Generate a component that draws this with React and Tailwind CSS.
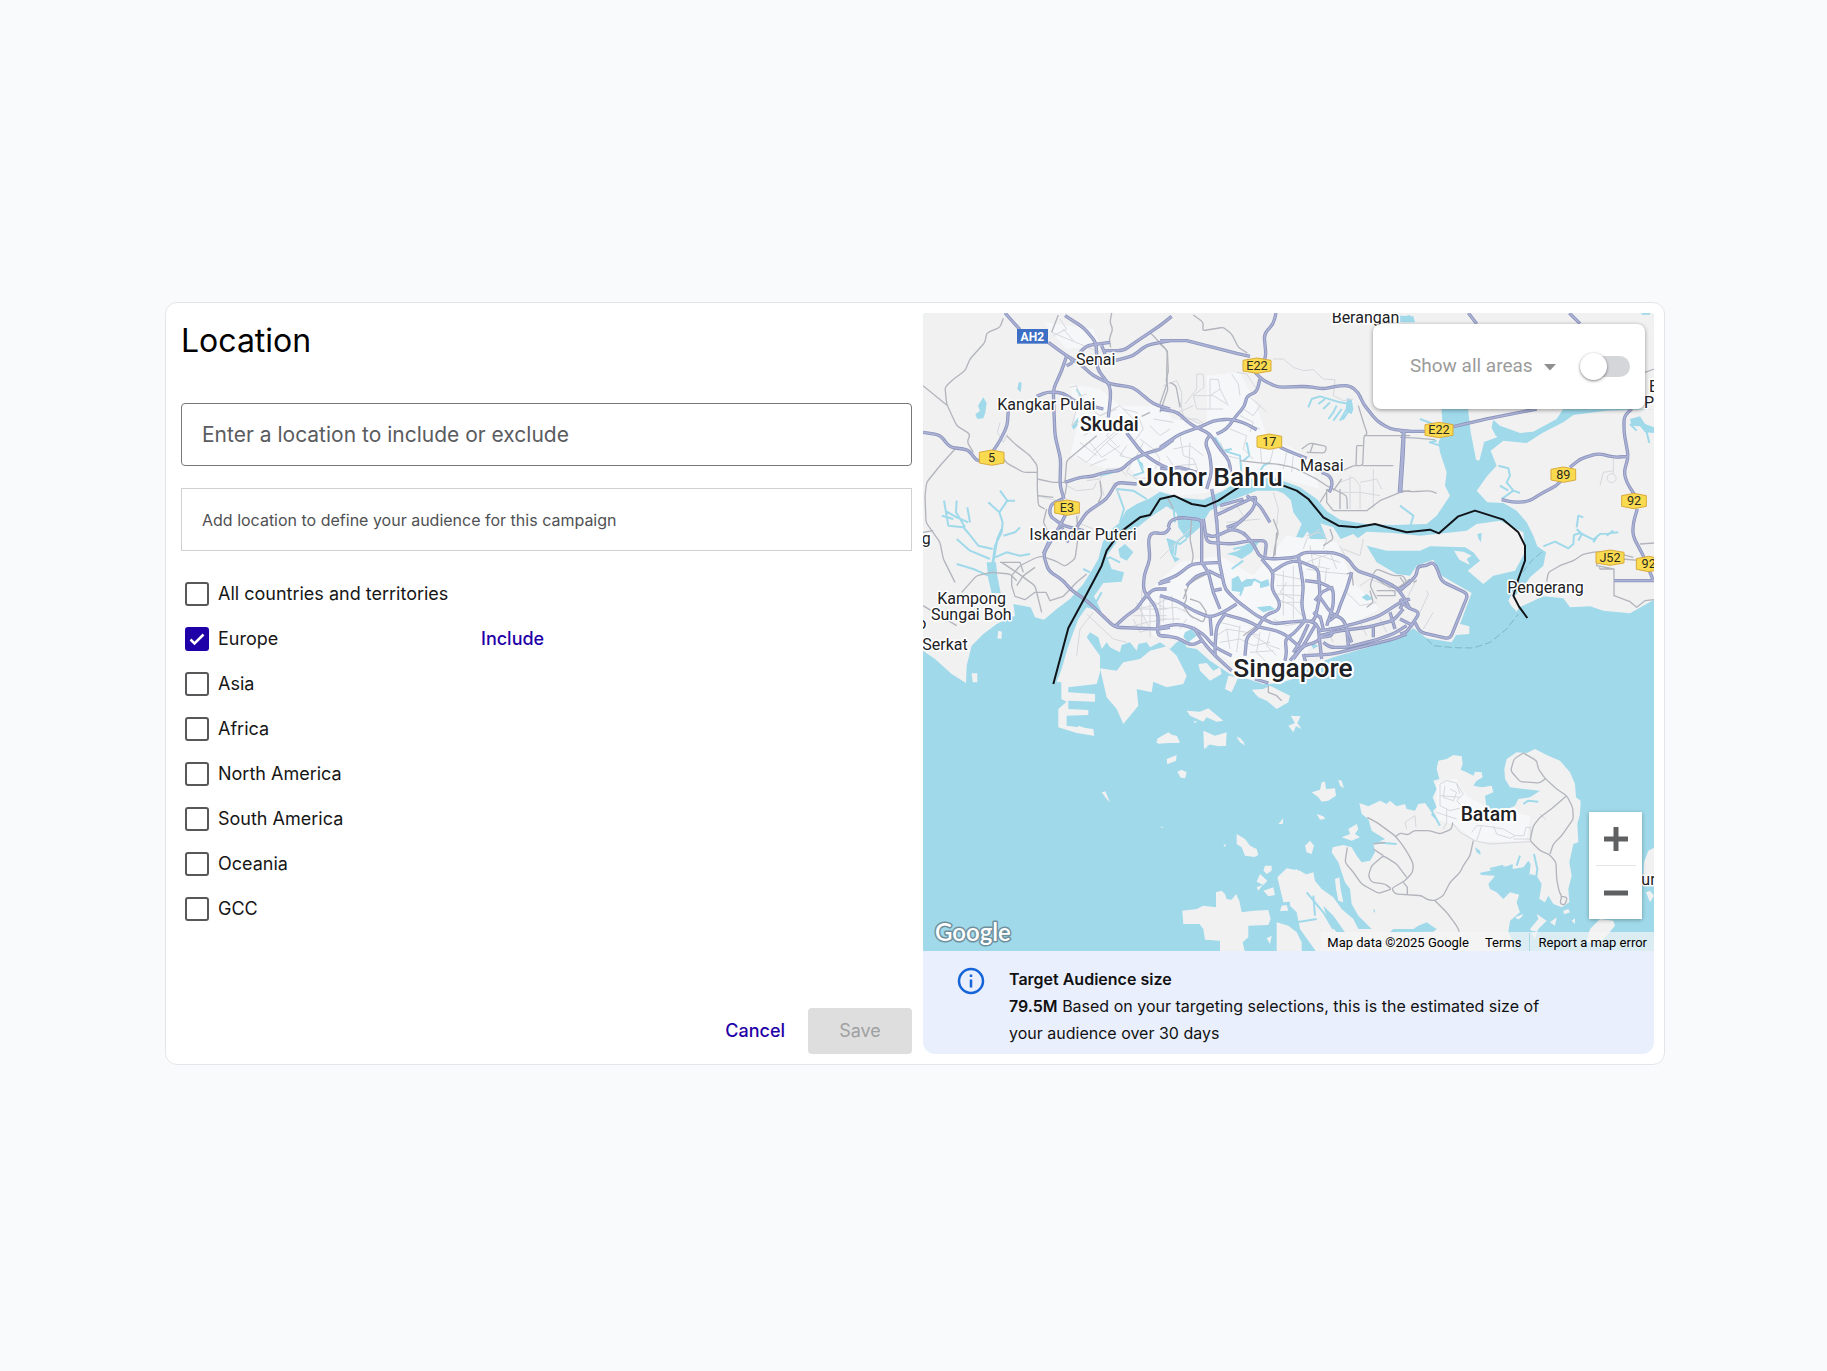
import { useState } from "react";

const REGIONS = [
  { name: "All countries and territories" },
  { name: "Europe", mode: "Include" },
  { name: "Asia" },
  { name: "Africa" },
  { name: "North America" },
  { name: "South America" },
  { name: "Oceania" },
  { name: "GCC" },
];

// The map is drawn from tiles, each with its own origin.
// land first, then towns, lakes and rivers, then streets < roads < highways
const TILES = [
  {
    x: 0,
    y: 0,
    land: [
      // Johor, west of the Johor river
      "M9 12H1645V80H1565V310L1570 370 1555 400 1560 430 1580 490 1575 530 1590 560 1570 590 1550 620 1520 645 1420 648 1340 646 1260 632 1220 606 1190 570 1140 535 1060 505 960 512 910 545 850 572 780 566 720 548 690 568 650 585 618 605 600 640 570 665 548 700 535 750 512 790 490 825 450 870 410 900 372 932 345 925 332 895 280 885 285 920 230 945 190 975 155 1010 140 1070 138 1122 95 1095 45 1050 9 1025Z",
      // Singapore
      "M640 665 690 625 740 592 770 612 775 655 800 690 840 655 870 605 930 575 1010 545 1070 545 1110 560 1120 610 1145 645 1130 680 1085 730 1130 715 1160 670 1200 643 1240 655 1262 690 1300 675 1340 710 1370 760 1430 795 1470 800 1490 770 1540 752 1565 800 1655 852 1620 945 1648 952V975L1608 978 1595 1000 1520 988 1480 958 1440 985 1360 1010 1240 1045 1170 1072 1150 1100 1080 1122 1030 1126 990 1112 930 1095 870 1055 830 1020 800 1015 790 990 770 1000 750 1020 720 1000 690 1015 680 1000 655 1005 650 1025 630 1000 605 1008 600 1030 570 1015 560 1000 545 1020 535 985 510 970 500 985 540 1040 540 1090 530 1125 445 1135V1150L525 1155V1178L445 1175V1200L505 1203V1218L440 1220V1250L520 1260 522 1280 470 1272 415 1255V1200L440 1178 424 1170V1120L410 1118 425 1080 442 1020 460 970 475 930 500 895 545 910 522 862 550 822 605 818 612 790 575 780 560 740 590 700Z",
      // Jurong island
      "M540 1078 590 1085 610 1060 660 1050 690 1025 740 1012 770 1040 800 1100 790 1125 740 1135 700 1118 695 1150 650 1140 655 1190 610 1245 590 1200 560 1165Z",
      "M155 1093H172V1120H158ZM235 965 246 968 244 990 232 988Z",
    ],
    urban: [
      "M450 225 540 240 600 290 720 290 760 330 860 350 860 200 960 190 1010 290 1040 380 1160 440 1200 540 1060 500 960 508 900 545 780 560 700 540 620 470 560 480 450 440 470 360Z",
      "M650 880 780 760 900 740 1000 800 1100 680 1250 700 1300 820 1380 900 1180 1000 1120 1090 980 1090 860 1010 700 980Z",
      "M370 40 520 60 540 110 440 120Z",
    ],
    water: [
      "M190 265 200 282 196 310 190 328 172 330 166 316 180 306 174 290ZM297 218 305 222 302 250 292 240Z",
      "M200 760H228L232 800 242 852H215L205 810Z",
      "M595 720 615 705 640 730 620 755 600 745Z",
      "M455 350 475 325 472 350 460 362ZM655 455 668 462 672 480Z",
    ],
    rivers: [
      "M215 780 225 710 245 670 248 640 238 610 262 575 240 545M262 575 285 575M238 610 205 580M218 720 175 710 145 672 130 655 85 650 72 575M110 575 108 610 135 655M75 605 110 625 145 640M210 750 150 725 110 690M205 800 160 780 110 765M225 745 260 730 300 740 330 735M250 680 285 670 300 655M100 630 65 620M150 640 142 595",
      "M220 760 232 690 245 660",
      "M600 640 612 600 590 540 640 545 680 570M540 760 570 745 600 760M545 850 525 885M490 780 510 790",
      "M470 240 490 275 480 300M650 440 670 490 640 500M580 490 540 500",
    ],
    streets: [
      "M450 235 470 230 478 262 500 255M470 300 455 350 490 330M500 290 540 320 600 290 640 330M430 60 460 95M395 70 540 130M510 400 545 445 600 410M490 380 560 340M520 425 590 365M560 400 610 440M470 440 500 460 560 400 620 350M600 330 560 380 590 410M610 300 650 310 670 360 640 400M240 340 232 370 250 400 262 375M500 515 540 510 560 480 600 480 620 500M540 515 552 560M640 450 620 490 650 510 700 505M660 390 700 420 740 410M420 30 440 60 400 80",
      "M700 420 720 450 705 480M440 530 470 545 520 540 530 520M350 560 410 575M450 590 480 610 470 640 520 660M610 960 680 940 740 930M650 900 700 890 740 870M620 1000 580 990 500 915M470 1040 480 960 520 910M650 880 690 960M670 860 740 900M640 930 660 970 690 960M665 845V960M690 850V985M720 860V985M650 900H740M640 920H740",
      "M540 320 590 300M580 345 640 360M620 410 600 440 640 450M480 400 530 440M510 470 560 450M580 520 600 560M670 400 650 440M690 350 720 380 750 360M700 330 760 340",
    ],
    roads: [
      "M250 28 240 55 200 72 195 100 150 150 135 185 95 215 75 235 80 285 110 350 150 375 142 400 160 430M9 230 80 288M105 420 60 470 20 520 15 560 18 640 60 700 70 750 105 820M395 70 415 18M245 440 260 462 310 490 350 490M260 380 285 405 330 440 352 470 352 540 355 590 375 600M352 510 400 520 440 520",
      "M575 12 570 40 578 60 568 90 572 115M690 70 742 125 745 190 738 210 744 240 720 310M690 310 665 322M530 380 440 455 435 520M440 525 435 560 395 585M540 515 545 560 535 580M355 560 400 565M740 560 760 600",
      "M125 850 170 800 215 790 270 795 290 815M240 760H300L310 790M245 760 290 790 345 830 365 910M275 800V830L285 862 315 872 345 850 378 850 390 875 430 862 470 820 500 795M275 800 300 770 350 745 368 742M290 830 310 800 345 775M380 600 370 640 385 670M470 620 475 680 465 750 435 772 405 755 375 745M9 670 40 665M9 890 60 920 110 950",
    ],
    highways: [
      "M255 12 300 62M385 100 440 140 480 165 520 200 570 225 640 235 700 285 750 300",
      "M440 140 425 185 400 240 402 310 405 380 422 450 420 530 432 570M430 570 392 585 388 620 430 650 490 665M440 610 420 650 370 735 385 785 430 815 450 840 500 875 585 955 720 960 750 955",
      "M435 20 490 55 528 100 532 180 570 230 572 260 565 325M350 262 385 248 430 252 470 280 550 300M265 300 262 350 240 395 220 425M9 370 60 378 90 415 145 422 170 455 185 455",
      "M435 520 480 505 520 502 550 490 600 485 640 450 680 432 720 422 760 392M620 372 665 430 710 462 750 480M550 125 610 125 660 90 720 50 755 22M585 155 640 140 680 108 750 95M440 170 460 160 450 145M480 130 500 110 570 100M545 110 555 135M650 525 590 520 560 570 500 610 470 655 440 700M370 735 390 690 430 655",
      "M750 655 735 675 695 670 685 690 690 750 672 800 670 845 705 890 715 920 712 980 750 982M585 952 620 920 650 900 670 870 700 840 740 840M715 825 750 815",
    ],
  },
  {
    x: 720,
    y: 0,
    land: [],
    urban: [],
    water: [
      "M720 25 750 18V40L735 38ZM560 268 575 270 580 300 575 315 560 310Z",
      "M350 535 400 530 450 580 480 640 500 690 450 690 440 650 420 610 440 590 400 580Z",
    ],
    rivers: [
      "M445 295 455 270 480 262 500 268 540 280 570 285M490 300 510 280M505 330 520 310 530 290M475 285 495 270M520 335 545 300M540 335 560 300 565 270M548 332 570 300M165 385 190 425 240 440 245 500 230 520M260 400 268 440 250 455M190 425 215 420M280 520 310 470 330 460",
      "M0 570 40 590 45 640M80 590 130 600",
    ],
    streets: [
      "M110 195 130 195 132 235 100 260 110 300M150 210 175 212 180 240 150 260M100 260 160 260 200 285M110 300 190 300M150 210 150 300M75 285 110 240 110 195M180 240 205 290M215 195 235 225 240 260M230 190 260 195 290 240 270 265 300 290M250 300 280 320 300 290 320 310M240 320 280 340 270 370M60 330 110 330 140 350M55 310 100 290M60 280 70 320 120 345M10 230 50 215 65 250 65 300",
      "M60 380 70 440 100 450 120 500M40 420 90 410 130 440M50 470 110 465M20 440 60 500 120 530M90 400 85 520M20 500 80 480 130 490M180 400 200 440 240 450M210 360 260 380 250 420 280 450M250 340 300 360M300 400 305 460M340 420 330 460M380 430 370 480M400 440 395 490M540 520 580 505 600 530 600 600M540 550 600 550 660 560M570 500 570 600M640 480 640 600M600 520 650 510 665 540",
      "M340 150 370 150 400 175 430 185 460 182 490 210 525 212 520 260 550 275 580 270M340 550 355 600 350 650M180 600 230 590 250 620 220 650M200 640 300 630",
    ],
    roads: [
      "M100 18 130 40 128 65 190 55 215 75 235 115 262 132M0 105 22 125 20 190 22 220 0 285M425 420 450 402 500 412 495 432 440 430M460 402 450 432M595 290 610 340 622 375 612 380 608 470 580 470 548 485M612 380H750M608 470H700M590 410 608 410M590 410 588 470",
      "M240 455 300 462 350 465 400 475 430 490 470 510 500 530 560 560 562 600M500 540V580L520 605H620L660 575 720 550 750 545M480 580 505 540M520 545 545 510M540 600V540M30 220 48 230 60 295",
    ],
    highways: [
      "M0 95H80L160 115 230 133 270 142M348 12 340 45 312 75 318 140 310 160M285 190 310 215 355 235 440 232 490 240 540 230 570 230 595 250 610 285 650 335 690 360 750 367",
      "M0 300 50 308 90 345 150 375 180 420 208 455 212 490M300 210 290 250 260 260 255 290 225 325 200 360 170 375M0 415 60 375 130 350 160 335 210 330 250 340 290 362M360 415 400 432 440 448M485 490 510 500 518 525 508 550M730 370 725 450 718 550",
      "M150 378 135 400 150 440 155 490 140 540M0 480 60 475 110 490M155 540 165 590 170 640M165 620 250 580 290 560 280 600 240 640 200 655M25 655 30 635 60 625 125 632 125 655M180 590 250 570M260 560 300 590 330 640",
    ],
  },
  {
    x: 1440,
    y: 0,
    land: [
      "M200 12H763V300L620 305 520 318 490 340 430 370 380 402 310 395 272 425 290 470 262 500 230 545 262 580 310 582 350 605 380 640 400 680 412 712 438 730 430 770 390 805 365 840 345 860 330 885 350 908 358 895 430 862 490 868 510 895 570 892 610 905 690 913 763 872V300L490 300 470 330 400 368 360 372 300 350 283 335 275 355 292 385 252 402 238 455 228 452 212 370 205 310Z",
      // Pulau Tekong and Ubin
      "M-130 690-100 668-20 672 60 680 110 675 200 665 230 645 300 635 370 670 375 730 345 785 280 800 250 825 203 785 240 755 220 730 195 715 90 712 60 725-40 725-100 710Z",
      "M162 725 190 728 215 740 200 750 210 768 178 752Z",
    ],
    urban: [],
    water: [
      "M490 300H620L520 316 490 335 430 370 380 400 310 392 262 420 250 400 292 385 370 378 400 370 470 332Z",
      "M690 330 720 322 735 345 763 355V372L735 370 720 352 695 350Z",
      "M0 20 40 22 45 40 0 40ZM725 12H750V17H725Z",
      "M232 675 245 672 243 700 236 690Z",
    ],
    rivers: [
      "M735 345 740 370 748 402M690 345 710 365M282 335 278 355 290 380M60 330 100 345M120 410 90 400 110 395M295 470 325 478 330 500 320 520 340 545 360 552M340 545 305 570M325 545 300 530M530 655 535 620 550 625M530 660 545 675 535 695M0 590 40 620 30 655",
      "M430 712 465 698 505 718 520 705 522 678 540 672 580 692 600 675 655 670M580 700 590 685M620 680 640 665",
    ],
    streets: ["M640 450V495M600 530 610 490 640 485M630 495A12 12 0 1 1 640 520 12 12 0 0 1 630 495"],
    roads: [
      "M0 545 40 548 90 545 110 553M0 385 60 388 105 392M735 190 763 180M440 818 445 790 480 770 520 755 550 735 590 728 650 732 700 745M598 775 600 780H642V860L690 878 710 895 735 875 763 872M665 750 725 755M720 705 763 702M590 735V770L640 780",
    ],
    highways: [
      "M0 367H75M160 353 260 330 410 300M205 12 230 44M508 12 540 44M12 370 10 430 2 550M305 572 340 580 385 578 430 550 470 530 490 508M510 475 540 450 595 433 640 445 685 442M695 300 672 322 672 370 685 442 672 490 680 520 702 555M712 600 700 640 698 680 730 740 760 815M642 815H763",
    ],
  },
  {
    x: 720,
    y: 630,
    land: [
      "M115 435 140 432 160 455 180 445 185 465 150 485 120 455ZM205 470 235 475 215 520 195 510Z",
      "M275 512 310 510 330 500 390 530 385 550 350 570 320 545 295 535Z",
      "M80 575 120 578 145 568 190 605 170 608 140 595 130 608 90 590ZM100 605 112 608 105 612Z",
      "M392 590 422 592 412 612 425 630 408 622 400 640 385 620 405 612Z",
      "M130 635 165 650 200 640 198 680 150 675 132 690ZM-10 660 25 640 50 658 58 672 0 672ZM230 650 255 672 242 670Z",
    ],
    urban: [],
    water: [
      "M215 180 235 170 245 190 260 180 285 180 275 200 250 205 245 220 215 215ZM300 190 325 180 328 200 300 208Z",
      "M200 105 235 95 260 75 300 65 275 100 245 120 225 110ZM290 265 330 260 345 270 310 280Z",
      "M620 225 640 240 620 245 605 235ZM75 340 95 330 110 350 85 370 70 355Z",
      "M20 60 45 70 40 110 60 120 45 130 30 100ZM450 370 475 380 460 390Z",
    ],
    rivers: ["M265 80 220 90M215 150 250 125M280 180 310 195M70 0 95 30 50 70 45 110M20 60 60 75 80 60M240 230 250 205"],
    streets: [
      "M340 165 420 180 430 160M350 200 425 200M345 225 430 230M365 250 430 250M370 155V290M400 140V300M350 240 400 260 425 290M380 190 360 220 400 240M440 150 500 160 560 165M430 100 480 110 540 130M450 80 460 140 510 150M480 120 470 180M510 100 530 150M440 130 520 100M500 150 495 190",
      "M170 350 200 330 260 340 300 350M180 370 240 360 280 380 330 370M200 330 210 390M240 320 230 400M300 340 290 400 320 430M330 340 320 380 350 410M270 400 340 395M180 310 240 325M0 270 50 265 80 280M0 300 60 300M10 240 10 310M35 230 40 310M70 270 100 300M60 330 80 300M340 300 380 320 430 310M440 50 480 40 500 60 490 90M550 90 600 110 610 60M540 80 560 120M480 30 440 60 430 90",
      "M600 200 630 180 680 200 700 220M560 220 600 260 650 250M500 330 520 370M600 310 620 350M660 300 680 340M280 350 330 380 360 390M0 120 60 60 100 20",
    ],
    roads: [
      "M95 0 90 60 100 110 95 135M80 200 110 180 150 160M75 210 80 240 70 260 90 290 130 310 140 280 120 250 90 240M340 0 355 40 345 80 340 115M350 40 345 110M560 165 575 160 580 200M640 165 650 150 700 170 730 170 740 190M630 215 640 250 620 265M650 215H705V230H650M640 170 630 200 650 240M85 200 70 240M490 80 520 60 510 30",
      "M750 180 710 210 680 200 650 180M325 500V520L350 530 365 545M290 320 250 350",
    ],
    highways: [
      "M0 190 50 170 95 135 180 130M170 0 178 130 195 210 230 245 290 290 340 315 380 310 440 305 465 310 480 335",
      "M130 0 140 70 215 75 270 65 320 65 315 110M135 45 160 55 215 30 250 40 280 75 300 115 340 120 410 115 430 100 520 100 560 115 590 155 650 175 710 205 735 240 750 270",
      "M0 230 50 245 100 275 150 295 190 280 230 255M190 285 260 305 300 325 350 335 380 350M195 285 170 320 165 380 165 410M125 0V130L145 160 160 220 180 270M0 325 50 315 95 325 130 345 165 385 215 410",
      "M0 350 50 355 95 380 125 365M100 325 130 370 165 410 215 455M300 320 260 355 255 410M305 120 340 160 335 210 360 250 355 275 320 285 295 320M335 160 380 130 415 125 475 150 480 230 465 300 450 310M415 110 430 200 425 260 435 305",
      "M435 185 480 190 520 210 520 260 500 320M480 235 515 285 550 300 575 370M465 245 490 215 520 205M575 160 560 210 540 260 530 290 500 310M435 305 400 345 375 360 380 400 375 425M445 315 420 370 400 400M465 320 430 380 390 425M480 335 520 330 600 310 660 290 720 250 750 240",
      "M480 350 540 335 620 325 700 305 730 270M490 345 470 370 430 380 400 420M490 370 510 385 560 385 640 365 700 345 740 320M435 410 520 405 600 385 700 360 740 345M475 330 485 420M640 325V355M690 280 705 330M560 330 565 380M510 325 520 350 480 355M480 290 490 330M460 280 480 295M150 290 155 350M285 480 325 492M215 30 250 0M430 405 440 440M380 350 420 385",
      "M160 215 185 210M145 155 185 175M720 210 750 190M80 200 110 170 145 160",
    ],
  },
  {
    x: 1440,
    y: 630,
    land: ["M345 205 340 240 352 275 335 262 325 245Z"],
    urban: [],
    water: [],
    rivers: [],
    streets: ["M80 215 85 225 60 280M70 330 100 280M20 240 50 180"],
    roads: ["M0 175 15 195 5 215M40 190 50 185"],
    highways: [
      "M0 215 50 170 52 142 80 140 95 130 108 140 125 187 205 225 150 360 60 340 45 310M0 240 20 265 60 280 40 310 20 340 0 345M0 300 40 320M0 270 10 250",
    ],
  },
  {
    x: 0,
    y: 1260,
    land: [
      "M425 -2 470 5 475 -10 520 5 522 20 480 10ZM708 38 740 15 770 20 780 40 715 44ZM852 5 862 22 900 25 918 20V50L895 52 862 45 860 62ZM950 25 962 28 976 50 960 40ZM740 90 770 78 768 95 742 106ZM772 128 785 122 800 130 796 148 782 146ZM545 190 556 187 570 220 560 210ZM720 290 732 297 725 296Z",
      "M950 315 975 330 990 350 1010 360 1015 378 1003 384 975 380 965 355 950 345ZM910 348 918 345 915 355Z",
      "M787 545 830 540 850 530 888 535V490L905 485 915 495 920 510 935 512 948 495 958 515 965 550 1000 545 1045 543 1052 570 1045 588 985 590 985 625 968 640 975 670H900V635L855 632 850 600 838 585H790Z",
      "M1035 410H1055V425L1040 435 1030 425ZM1020 435 1042 455 1030 468 1010 458ZM1010 475 1028 468 1015 485ZM1030 485 1060 475 1065 498 1045 502ZM1072 445 1100 418 1140 425 1165 440V500L1140 515 1090 520ZM1085 530 1100 528 1105 545 1080 546ZM1040 628 1055 620 1050 645ZM1070 670V580L1105 590 1130 610 1145 640V670ZM1075 285 1090 268 1088 285Z",
    ],
    urban: [],
    water: [],
    rivers: [],
    streets: [],
    roads: [],
    highways: [],
  },
  {
    x: 1110,
    y: 1260,
    land: [
      "M208 222 235 232 270 215 290 225 300 215 320 232 345 225 350 240 375 245 385 225 405 222 425 250 440 235 428 205 440 180 430 155 448 150 440 120 445 95 470 90 490 78 515 82 518 105 512 122 530 130 550 140 555 128 575 130 578 145 560 155 550 170 575 175 605 170 610 190 585 200 590 240 640 245 675 230 685 210 720 205 750 185 700 180 660 175 645 150 643 120 650 90 680 70 710 72 735 60 770 78 810 95 840 130 855 165 858 205 872 215 870 255 862 285 865 340 850 345 838 400 845 440 835 480 838 520 815 535 790 525 775 500 765 520 748 510 755 465 740 440 720 435 715 470 690 490 680 520 690 550 660 575 655 610 670 640V670H80L30 600 20 550 0 530V430L20 420 35 440 70 430 75 455 95 480 130 505 155 540 190 570 205 600 245 600 205 560 185 525 180 480 165 460 145 400 125 370 128 355 160 348 185 355 200 380 215 400 240 395 255 370 250 345 285 330 245 305 235 270 215 255Z",
      "M65 190 90 182 95 160 105 158 108 180 135 178 138 200 115 215 95 218 85 205ZM145 152 155 155 162 178 150 170ZM80 255 100 262 106 270 90 272ZM155 325 180 315 175 300 200 285 205 300 195 315 210 325 185 335ZM45 350 60 335 72 350 65 375 50 370Z",
      "M135 450 148 445 152 480 160 520 145 515 138 480ZM675 565 700 555 690 575ZM720 600 745 570 740 555 770 575 745 600 735 630ZM780 580 800 565 795 590ZM820 545 835 540 840 550 822 556ZM845 575 855 568 855 585ZM900 600 930 570 970 575 975 590 950 620 930 640H890ZM1062 400 1075 365 1095 355V470L1060 450ZM1068 490 1080 485 1092 500 1080 520Z",
    ],
    urban: ["M440 160 500 150 530 200 600 240 720 260 710 335 560 340 500 290 440 270Z"],
    water: [
      "M568 432 600 425 620 415 650 412 668 405V420L700 415 715 395 722 405 718 440 750 465 700 500 660 490 640 510 620 490 600 480 595 465 615 440 575 438ZM555 355 570 365 572 378 560 370ZM250 540 256 545 252 552Z",
      "M385 590 410 580 425 590 440 600 430 608 300 610 310 600 370 600ZM100 530 130 560 165 610H140L115 580Z",
      "M675 610 680 575 715 550 740 560 700 600 750 610Z",
    ],
    rivers: [
      "M690 380 680 410M732 375 742 420 735 470M425 245 450 290M425 255 440 270M700 225 715 215 745 218M255 340 320 345M50 490 100 550 130 600M20 580 80 570M70 500 75 560M640 410 600 420",
    ],
    streets: [
      "M450 165 470 155 500 162 520 195 500 215 520 235 480 245 450 230ZM465 170 460 205 490 215 500 190 480 180M450 200 510 205M470 240V280L460 300M440 250 500 270M500 165 510 195M350 300 345 280 375 260 378 295M610 290 620 315 660 328 675 320 640 300 580 290 560 290 545 310M675 320H702L708 295H722V330H670M555 335 600 345 720 338M575 290 560 335M490 285 510 310 555 335M750 255 768 272",
    ],
    roads: [
      "M232 265 260 280 315 320 335 345 355 375 370 405 368 430 345 455 305 478 315 495 395 500 412 512 435 515 460 500 480 460 510 430 520 410 540 380 550 335M318 322 330 312 355 318 370 305 420 305 450 315 485 300 488 280M435 515 470 550 500 590 508 608M340 460 352 475V495M172 355 165 400 190 430 215 465 265 493 305 480 285 465 245 460 235 440 245 410 280 380 320 405 350 445M250 345 285 340M280 380 250 360",
      "M700 72 740 95 745 120 765 148 800 180 830 200 848 235 850 270 815 320 790 345 780 375M700 72 672 90 662 125 690 158 750 162 765 150M830 200 790 235 750 265 730 290 720 335 750 365 780 378 798 400 800 450 808 490 815 500 810 525 825 528 832 505 815 502",
    ],
    highways: [],
  },
];

const LAYERS = [
  { key: "land", fill: "#f1f1f2" },
  { key: "urban", fill: "#f6f7f9" },
  { key: "water", fill: "#9fd9ea" },
  { key: "rivers", stroke: "#9fd9ea", width: 6 },
  { key: "streets", stroke: "#d6d8dd", width: 3 },
  { key: "roads", stroke: "#b3b5bd", width: 4, round: 8 },
  { key: "highways", stroke: "#8c94ba", width: 10, round: 16 },
  { key: "highways", stroke: "#abb2d6", width: 5, round: 16 },
];

const BORDER = [
  "M400 1125 445 957 495 865 545 770 560 725 600 670 660 625 690 618 720 570 762 560 815 585 855 592 895 575 960 532",
  "M1090 530 1130 545 1165 570 1210 625 1255 650 1310 655 1365 645 1400 655 1460 670 1530 662 1557 673 1615 622 1665 605 1750 632 1795 670 1815 710 1815 755 1795 810 1780 860 1797 893 1822 927",
];

const PLACES = [
  { name: "Senai", x: 468, y: 168 },
  { name: "Kangkar Pulai", x: 232, y: 302 },
  { name: "Skudai", x: 480, y: 366, size: 58 },
  { name: "Johor Bahru", x: 655, y: 532, size: 79 },
  { name: "Berangan", x: 1235, y: 41 },
  { name: "Masai", x: 1140, y: 486 },
  { name: "Iskandar Puteri", x: 328, y: 694 },
  { name: "Kampong", x: 52, y: 886 },
  { name: "Sungai Boh", x: 33, y: 932 },
  { name: "Serkat", x: 7, y: 1022 },
  { name: "g", x: 5, y: 706 },
  { name: "o", x: -8, y: 960 },
  { name: "Singapore", x: 940, y: 1105, size: 79 },
  { name: "Pengerang", x: 1762, y: 852 },
  { name: "Batam", x: 1622, y: 1535, size: 58 },
  { name: "E", x: 2187, y: 250 },
  { name: "P", x: 2172, y: 297 },
  { name: "ur", x: 2164, y: 1728 },
];

const SHIELDS = [
  { road: "5", x: 215, y: 446 },
  { road: "E3", x: 441, y: 596 },
  { road: "E22", x: 1011, y: 170 },
  { road: "17", x: 1048, y: 398 },
  { road: "E22", x: 1557, y: 363 },
  { road: "89", x: 1930, y: 497 },
  { road: "92", x: 2142, y: 576 },
  { road: "J52", x: 2070, y: 746 },
  { road: "92", x: 2186, y: 765 },
];

// Rounds the corners of plain "Mx y x y ..." runs, leaves the others alone.
function roundCorners(d, radius) {
  return d
    .split("M")
    .filter(Boolean)
    .map((run) => {
      if (/[A-Z]/.test(run)) return "M" + run;
      const n = run.trim().split(/\s+/).map(Number);
      const pts = [];
      for (let i = 0; i + 1 < n.length; i += 2) pts.push([n[i], n[i + 1]]);

      const towards = (a, b) => {
        const len = Math.hypot(b[0] - a[0], b[1] - a[1]) || 1;
        const k = Math.min(radius, len / 2) / len;
        return [a[0] + (b[0] - a[0]) * k, a[1] + (b[1] - a[1]) * k];
      };

      let out = `M${pts[0]}`;
      for (let i = 1; i < pts.length - 1; i++) {
        out += `L${towards(pts[i], pts[i - 1])}Q${pts[i]} ${towards(pts[i], pts[i + 1])}`;
      }
      return out + `L${pts[pts.length - 1]}`;
    })
    .join("");
}

function MapCanvas() {
  return (
    <svg
      viewBox="9 12 2193 1914"
      preserveAspectRatio="xMidYMid slice"
      className="block h-full w-full"
      strokeLinejoin="round"
      fontFamily="Roboto, sans-serif"
    >
      <rect x="0" y="0" width="2210" height="1940" fill="#9fd9ea" />
      {LAYERS.map((layer, i) => (
        <g key={i} fill={layer.fill || "none"} stroke={layer.stroke} strokeWidth={layer.width}>
          {TILES.map((tile, t) => (
            <g key={t} transform={`translate(${tile.x} ${tile.y})`}>
              {tile[layer.key].map((d) => (
                <path key={d} d={layer.round ? roundCorners(d, layer.round) : d} />
              ))}
            </g>
          ))}
        </g>
      ))}

      {/* ferry route and national border */}
      <path
        d="M1520 990 1540 1010 1600 1016 1660 1017 1710 1000 1760 960 1795 915M1808 790 1835 755 1870 725"
        fill="none"
        stroke="#80b7c8"
        strokeWidth="3"
        strokeDasharray="22 9"
      />
      {BORDER.map((d) => (
        <path key={d} d={d} fill="none" stroke="#111418" strokeWidth="6" />
      ))}

      <g fontSize="38" textAnchor="middle">
        <rect x="291" y="60" width="93" height="44" fill="#3d70c4" />
        <text x="337" y="96" fontWeight="700" fontSize="36" fill="#fff">
          AH2
        </text>
        {SHIELDS.map((s) => {
          const w = s.road.length > 2 ? 42 : 37;
          return (
            <g key={`${s.road}-${s.x}`} transform={`translate(${s.x} ${s.y})`}>
              <path
                d={`M${-w} -16 0 -23 ${w} -16V16L0 23 ${-w} 16Z`}
                fill="#fadb50"
                stroke="#d9aa3b"
                strokeWidth="3"
              />
              <text y="13" fill="#2b2b22">
                {s.road}
              </text>
            </g>
          );
        })}
      </g>

      {PLACES.map((p) => (
        <text
          key={p.name}
          x={p.x}
          y={p.y}
          fontSize={p.size || 48}
          fontWeight={p.size ? 500 : 400}
          fill="#202124"
          stroke="#fff"
          strokeWidth={p.size ? 12 : 9}
          paintOrder="stroke"
        >
          {p.name}
        </text>
      ))}
    </svg>
  );
}

function AreaMap() {
  const [showAll, setShowAll] = useState(false);

  return (
    <div className="relative aspect-[731/638] w-full overflow-hidden rounded-t-sm">
      <MapCanvas />

      {/* Area filter */}
      <div className="absolute top-[11px] right-[9px] flex h-[85px] w-[272px] items-center justify-between rounded-lg bg-white pr-[15px] pl-[37px] font-[Roboto,sans-serif] shadow-[0_1px_4px_rgba(0,0,0,0.4)]">
        <button className="flex items-center gap-2.5 text-[19px] text-[#9b9b9b]">
          Show all areas
          <svg width="14" height="8" viewBox="0 0 14 8" fill="#8f8f8f">
            <path d="M1 1h12L7 7.500Z" />
          </svg>
        </button>
        <label className="relative flex h-[27px] w-[50px] items-center justify-end">
          <input
            type="checkbox"
            role="switch"
            aria-label="Show all areas on the map"
            checked={showAll}
            onChange={() => setShowAll(!showAll)}
            className="peer h-[21px] w-10 appearance-none rounded-full bg-[#d5d6da]"
          />
          <span className="pointer-events-none absolute left-0 size-[27px] rounded-full bg-white shadow-[0_1px_3px_rgba(0,0,0,0.5)] peer-checked:left-6" />
        </label>
      </div>

      {/* Attribution */}
      <svg className="absolute bottom-0 left-2 h-9 w-[90px]" viewBox="0 0 90 36">
        <text
          x="4"
          y="26"
          fontFamily="Lato, sans-serif"
          fontWeight="600"
          fontSize="24"
          fill="#fff"
          stroke="#6f8f9c"
          strokeWidth="3"
          strokeLinejoin="round"
          paintOrder="stroke"
        >
          Google
        </text>
      </svg>
      <div className="absolute right-0 bottom-0 flex h-[19px] items-center bg-[#f5f5f5]/70 pt-0.5 pr-[7px] pl-1.5 font-[Roboto,sans-serif] text-[13px] text-black">
        <span>Map data ©2025 Google</span>
        <a href="#terms" className="ml-4">
          Terms
        </a>
        <a href="#report" className="ml-2 border-l border-[#a9d9e8] pl-2">
          Report a map error
        </a>
      </div>

      {/* Zoom */}
      <div className="absolute right-3 bottom-8 flex h-[107px] w-[53px] flex-col items-center bg-white shadow-[0_1px_4px_rgba(0,0,0,0.3)]">
        <button aria-label="Zoom in" className="grid w-full flex-1 place-items-center">
          <svg width="24" height="24" viewBox="0 0 24 24" fill="#5f6062">
            <path d="M9.500 0h5v9.500H24v5h-9.500V24h-5v-9.500H0v-5h9.500Z" />
          </svg>
        </button>
        <div className="h-px w-10 bg-[#e6e6e6]" />
        <button aria-label="Zoom out" className="grid w-full flex-1 place-items-center">
          <svg width="24" height="24" viewBox="0 0 24 24" fill="#5f6062">
            <path d="M0 9.500h24v5H0Z" />
          </svg>
        </button>
      </div>
    </div>
  );
}

function RegionRow({ region, checked, onToggle }) {
  return (
    <li className="flex h-[45px] items-center text-lg text-[#161616]">
      <label className="flex w-[296px] items-center gap-[9px]">
        <span className="relative size-6">
          <input
            type="checkbox"
            checked={checked}
            onChange={onToggle}
            className="block size-6 appearance-none rounded-[3px] border-2 border-[#58585b] bg-white checked:border-[#1f00a8] checked:bg-[#1f00a8]"
          />
          {checked && (
            <svg
              className="pointer-events-none absolute inset-0 size-6"
              viewBox="0 0 24 24"
              fill="none"
              stroke="#fff"
              strokeWidth="2.500"
            >
              <path d="m5.500 12.500 4 4 9-9" />
            </svg>
          )}
        </span>
        {region.name}
      </label>
      {region.mode && <button className="font-medium text-[#1f00a8]">{region.mode}</button>}
    </li>
  );
}

export default function App() {
  const [selected, setSelected] = useState(["Europe"]);

  function toggle(name) {
    setSelected((prev) =>
      prev.includes(name) ? prev.filter((n) => n !== name) : [...prev, name]
    );
  }

  return (
    <main className="flex min-h-screen items-center bg-[#f8fafc] pr-[162px] pb-1 pl-[165px] font-[Inter,sans-serif]">
      <div className="grid w-full grid-cols-2 gap-[11px] rounded-xl border border-[#e3e5e8] bg-white py-[10px] pr-[10px] pl-[15px]">
        {/* Location picker */}
        <section className="flex flex-col pt-2">
          <h1 className="text-[32px] leading-10 text-black">Location</h1>

          <input
            type="text"
            aria-label="Location"
            placeholder="Enter a location to include or exclude"
            className="mt-[42px] h-[63px] w-full rounded border border-[#757779] px-5 text-[21px] placeholder:text-[#5a5c5f]"
          />
          <p className="mt-[22px] flex h-[63px] items-center border border-[#cfd0d2] px-5 text-base text-[#4f5154]">
            Add location to define your audience for this campaign
          </p>

          <ul className="mt-5 pl-1">
            {REGIONS.map((r) => (
              <RegionRow
                key={r.name}
                region={r}
                checked={selected.includes(r.name)}
                onToggle={() => toggle(r.name)}
              />
            ))}
          </ul>

          <div className="mt-auto flex items-center justify-end gap-[23px] text-lg">
            <button className="font-medium text-[#1f00a8]">Cancel</button>
            <button disabled className="h-[46px] w-[104px] rounded bg-[#dededf] text-[#9fa0a1]">
              Save
            </button>
          </div>
        </section>

        {/* Map and audience estimate */}
        <section>
          <AreaMap />
          <div className="flex gap-6 rounded-b-xl bg-[#e9effd] px-[34px] pt-[15px] pb-[7px] text-base leading-[27px] text-[#111]">
            <svg
              className="mt-px size-7 shrink-0"
              viewBox="0 0 28 28"
              fill="none"
              stroke="#1565d8"
              strokeWidth="2.500"
            >
              <circle cx="14" cy="14" r="12" />
              <path d="M14 12.500v8M14 7.500v2.500" />
            </svg>
            <div className="max-w-[560px]">
              <h2 className="font-semibold">Target Audience size</h2>
              <p>
                <strong className="font-semibold">79.5M</strong> Based on your targeting selections,
                this is the estimated size of your audience over 30 days
              </p>
            </div>
          </div>
        </section>
      </div>
    </main>
  );
}
